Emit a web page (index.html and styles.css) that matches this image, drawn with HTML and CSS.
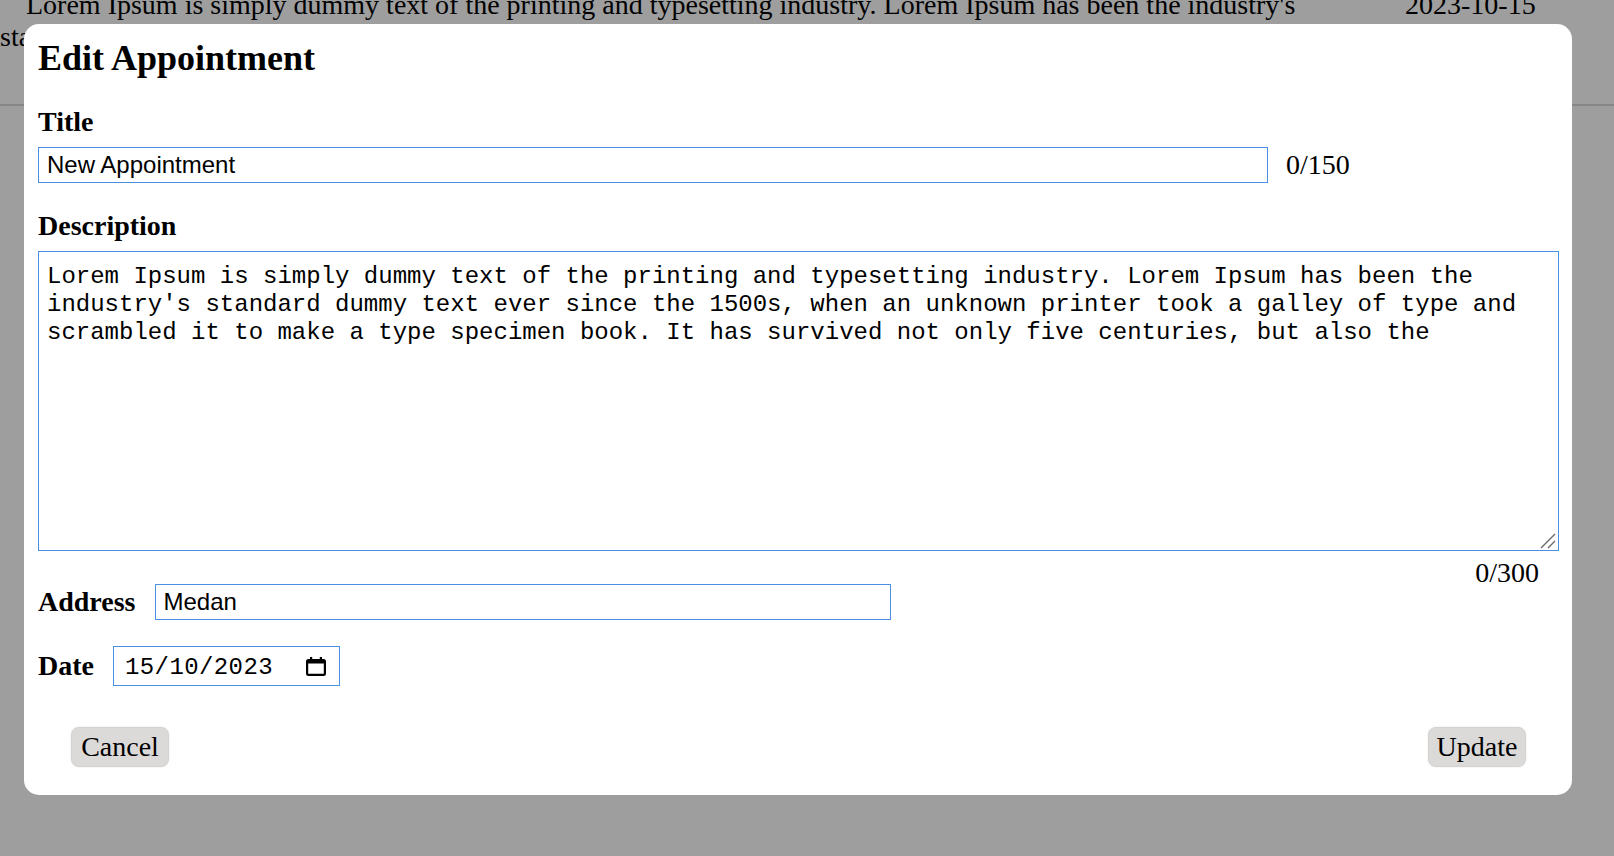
FILE: index.html
```html
<!DOCTYPE html>
<html lang="en">
<head>
<meta charset="utf-8">
<title>Edit Appointment</title>
<link rel="stylesheet" href="styles.css">
</head>
<body>
  <main class="page">
    <div class="table-row">
      <div class="cell-desc">Lorem Ipsum is simply dummy text of the printing and typesetting industry. Lorem Ipsum has been the industry's standard dummy text ever since the 1500s, when an unknown printer took a galley of type and scrambled it to make a type specimen book. It has survived not only five centuries, but also the</div>
      <div class="cell-date">2023-10-15</div>
    </div>
  </main>

  <div class="backdrop">
    <div class="modal" role="dialog" aria-labelledby="modal-title">
      <h2 class="modal-title" id="modal-title">Edit Appointment</h2>

      <label class="field-label" for="title">Title</label>
      <div class="field-row">
        <input id="title" class="text-input title-input" type="text" value="New Appointment">
        <span class="counter">0/150</span>
      </div>

      <label class="field-label" for="desc">Description</label>
      <div class="desc-wrap">
        <textarea id="desc" class="desc-input">Lorem Ipsum is simply dummy text of the printing and typesetting industry. Lorem Ipsum has been the industry's standard dummy text ever since the 1500s, when an unknown printer took a galley of type and scrambled it to make a type specimen book. It has survived not only five centuries, but also the</textarea>
        <svg class="grip" width="16" height="16" viewBox="0 0 16 16" aria-hidden="true">
          <path d="M1 15L15 1M8 15L15 8" stroke="#6b6b6b" stroke-width="1.4" fill="none"/>
        </svg>
      </div>
      <div class="counter counter-right">0/300</div>

      <div class="inline-row address-row">
        <label class="inline-label" for="address">Address</label>
        <input id="address" class="text-input address-input" type="text" value="Medan">
      </div>

      <div class="inline-row date-row">
        <label class="inline-label" for="date">Date</label>
        <div class="date-field">
          <input id="date" class="date-text" type="text" value="15/10/2023">
          <svg class="cal-icon" width="20" height="19" viewBox="0 0 20 19" aria-hidden="true">
            <rect x="4" y="0" width="2.2" height="3" fill="#000"/>
            <rect x="13.8" y="0" width="2.2" height="3" fill="#000"/>
            <path fill="#000" fill-rule="evenodd" d="M2.5 2h15a2.5 2.5 0 0 1 2.5 2.5v12A2.5 2.5 0 0 1 17.5 19h-15A2.5 2.5 0 0 1 0 16.5v-12A2.5 2.5 0 0 1 2.5 2zM2.2 6.6v10.2h15.6V6.6z"/>
          </svg>
        </div>
      </div>

      <div class="actions">
        <button class="btn" type="button">Cancel</button>
        <button class="btn" type="button">Update</button>
      </div>
    </div>
  </div>
</body>
</html>
```

FILE: styles.css
```css
html, body {
  margin: 0;
  padding: 0;
}

body {
  font-family: "Liberation Serif", "Times New Roman", serif;
  font-size: 28px;
  color: #000;
  background: #fff;
  overflow: hidden;
}

/* underlying page */
.page {
  margin-top: -11px;
}

.table-row {
  display: flex;
  align-items: flex-start;
  height: 117px;
  box-sizing: border-box;
  border-bottom: 2px solid #d9d9d9;
  line-height: 32px;
}

.cell-desc {
  width: 1356px;
  text-indent: 26px;
  display: -webkit-box;
  -webkit-box-orient: vertical;
  -webkit-line-clamp: 2;
  overflow: hidden;
}

.cell-date {
  margin-left: 49px;
  white-space: nowrap;
}

/* modal */
.backdrop {
  position: fixed;
  inset: 0;
  background: rgba(0, 0, 0, 0.38);
  padding: 24px 0 0 24px;
  display: flex;
  align-items: flex-start;
}

.modal {
  width: 1548px;
  box-sizing: border-box;
  background: #fff;
  border-radius: 15px;
  padding: 14px 13px 28px 14px;
}

.modal-title {
  margin: 0;
  font-size: 36px;
  font-weight: bold;
  line-height: 41px;
}

.field-label {
  display: block;
  font-weight: bold;
  line-height: 32px;
  margin: 27px 0 9px;
}

.field-row {
  display: flex;
  align-items: center;
}

.text-input {
  height: 36px;
  box-sizing: border-box;
  border: 1px solid #4a90e2;
  border-radius: 0;
  padding: 0 8px;
  font-family: "Liberation Sans", Arial, sans-serif;
  font-size: 24px;
  color: #000;
  background: #fff;
  outline: none;
}

.title-input {
  width: 1230px;
}

.counter {
  line-height: 32px;
  margin-left: 18px;
}

.desc-wrap {
  position: relative;
  width: 1521px;
}

.desc-input {
  display: block;
  width: 1521px;
  height: 300px;
  box-sizing: border-box;
  border: 1px solid #4a90e2;
  border-radius: 0;
  padding: 11px 8px 8px;
  margin: 0;
  font-family: "Liberation Mono", "Courier New", monospace;
  font-size: 24px;
  line-height: 28px;
  color: #000;
  outline: none;
  resize: none;
}

.grip {
  position: absolute;
  right: 3px;
  bottom: 2px;
  pointer-events: none;
}

.counter-right {
  margin: 10px 0 0;
  line-height: 23px;
  text-align: right;
  padding-right: 20px;
}

.inline-row {
  display: flex;
  align-items: center;
  column-gap: 19px;
}

.inline-label {
  font-weight: bold;
  line-height: 32px;
}

.address-input {
  width: 736px;
}

.date-row {
  margin-top: 26px;
}

.date-field {
  width: 227px;
  height: 40px;
  box-sizing: border-box;
  border: 1px solid #4a90e2;
  display: flex;
  align-items: center;
  padding: 0 13px 0 11px;
}

.date-text {
  flex: 1;
  min-width: 0;
  border: 0;
  padding: 3px 0 0;
  margin: 0;
  outline: none;
  font-family: "Liberation Mono", "Courier New", monospace;
  font-size: 24px;
  letter-spacing: 0.4px;
  color: #000;
  background: transparent;
}

.cal-icon {
  flex: none;
  display: block;
}

.actions {
  display: flex;
  justify-content: space-between;
  margin-top: 41px;
  padding: 0 33px;
}

.btn {
  width: 98px;
  height: 40px;
  padding: 0;
  font-family: "Liberation Serif", "Times New Roman", serif;
  font-size: 28px;
  color: #000;
  background: #dcd9d9;
  border: 1px solid #d5d2d2;
  border-radius: 8px;
  box-shadow: 0 0 2px rgba(0, 0, 0, 0.12);
}
```
